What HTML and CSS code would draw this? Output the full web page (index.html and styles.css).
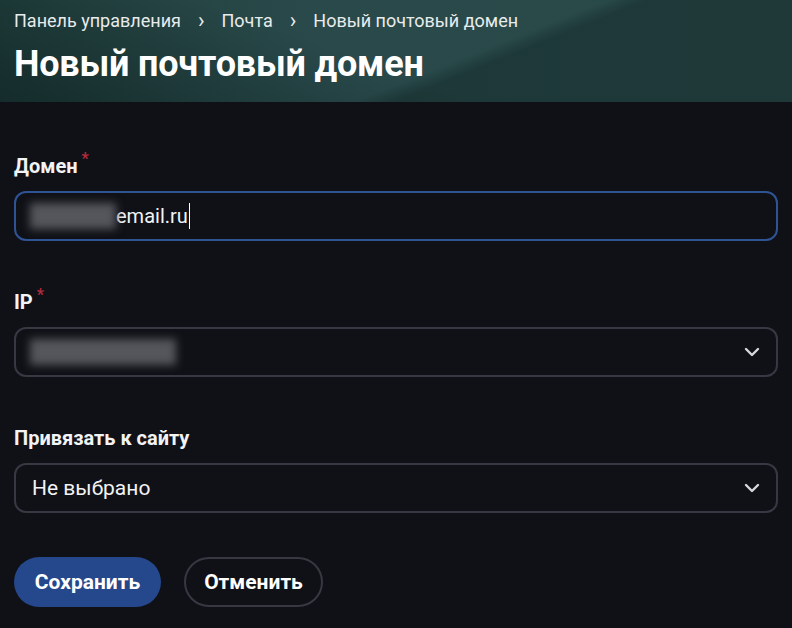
FILE: index.html
```html
<!DOCTYPE html>
<html lang="ru">
<head>
  <meta charset="UTF-8" />
  <meta name="viewport" content="width=device-width, initial-scale=1" />
  <title>Новый почтовый домен</title>
  <link rel="stylesheet" href="styles.css">
</head>
<body>
  <div class="header">
    <div class="crumbs">
      <a href="#">Панель управления</a>
      <span class="sep">&#x203A;</span>
      <a href="#">Почта</a>
      <span class="sep">&#x203A;</span>
      <span>Новый почтовый домен</span>
    </div>
    <h1>Новый почтовый домен</h1>
  </div>

  <form class="form">
    <div class="field">
      <label class="label">Домен<span class="req">*</span></label>
      <div class="input focused">
        <span class="blur blur-name"></span><span class="value">email.ru</span><span class="caret"></span>
      </div>
    </div>

    <div class="field">
      <label class="label">IP<span class="req">*</span></label>
      <div class="input select">
        <span class="blur blur-ip"></span>
        <svg class="chev" width="20" height="20" viewBox="0 0 20 20"><path d="M4 7l6 6 6-6" fill="none" stroke="#d6d8e0" stroke-width="2.4" stroke-linecap="round" stroke-linejoin="round"/></svg>
      </div>
    </div>

    <div class="field">
      <label class="label">Привязать к сайту</label>
      <div class="input select">
        <span class="value">Не выбрано</span>
        <svg class="chev" width="20" height="20" viewBox="0 0 20 20"><path d="M4 7l6 6 6-6" fill="none" stroke="#d6d8e0" stroke-width="2.4" stroke-linecap="round" stroke-linejoin="round"/></svg>
      </div>
    </div>

    <div class="actions">
      <button type="button" class="btn btn-primary">Сохранить</button>
      <button type="button" class="btn btn-ghost">Отменить</button>
    </div>
  </form>
</body>
</html>
```

FILE: styles.css
```css
body {
  font-family: Roboto, "Noto Sans", sans-serif;
  background: #101117;
  color: #f2f3f5;
  margin: 0;
  padding: 0;
}
.header {
  height: 102px;
  padding: 0 14px;
  box-sizing: border-box;
  background:
    linear-gradient(158deg, rgba(255, 255, 255, 0) 58%, rgba(8, 24, 24, 0.35) 62%),
    linear-gradient(20deg, rgba(10, 28, 28, 0.55) 0%, rgba(10, 28, 28, 0) 45%),
    linear-gradient(90deg, #21403d 0%, #29494a 40%, #2a4a49 100%);
  overflow: hidden;
}
.crumbs {
  padding-top: 10px;
  font-size: 18px;
  line-height: 22px;
  display: flex;
  gap: 17px;
  color: #e8ecec;
}
.crumbs a {
  color: #e8ecec;
  text-decoration: none;
}
.crumbs .sep {
  font-size: 22px;
}
h1 {
  margin: 12px 0 0;
  font-size: 36px;
  line-height: 40px;
  font-weight: 700;
  color: #ffffff;
  letter-spacing: -0.2px;
}
.form {
  padding: 0 14px;
}
.field {
  padding-top: 49px;
}
.field:first-child {
  padding-top: 52px;
}
.label {
  display: block;
  height: 24px;
  font-size: 20px;
  font-weight: 700;
  line-height: 24px;
  margin-bottom: 13px;
}
.req {
  color: #b52a3d;
  font-size: 16px;
  position: relative;
  top: -9px;
  margin-left: 4px;
}
.input {
  height: 50px;
  box-sizing: border-box;
  border: 2px solid #373842;
  border-radius: 12px;
  display: flex;
  align-items: center;
  padding: 0 16px;
  font-size: 20px;
  background: #101117;
}
.input.focused {
  border-color: #2f5395;
}
.select .value {
  font-size: 21px;
}
.select .chev {
  margin-left: auto;
  margin-right: -2px;
}
.blur {
  display: inline-block;
  height: 26px;
  margin-left: -2px;
  background: #55565c;
  filter: blur(4px);
}
.blur-name {
  width: 86px;
}
.blur-ip {
  width: 146px;
}
.caret {
  display: inline-block;
  width: 1px;
  height: 26px;
  background: #ffffff;
  margin-left: 1px;
}
.actions {
  display: flex;
  gap: 23px;
  padding-top: 44px;
}
.btn {
  height: 50px;
  border-radius: 25px;
  font-family: Roboto, "Noto Sans", sans-serif;
  font-size: 21px;
  font-weight: 700;
  color: #ffffff;
  padding: 0;
  cursor: pointer;
}
.btn-primary {
  background: #25488d;
  border: none;
  width: 147px;
}
.btn-ghost {
  background: transparent;
  border: 2px solid #373842;
  width: 139px;
}
```
